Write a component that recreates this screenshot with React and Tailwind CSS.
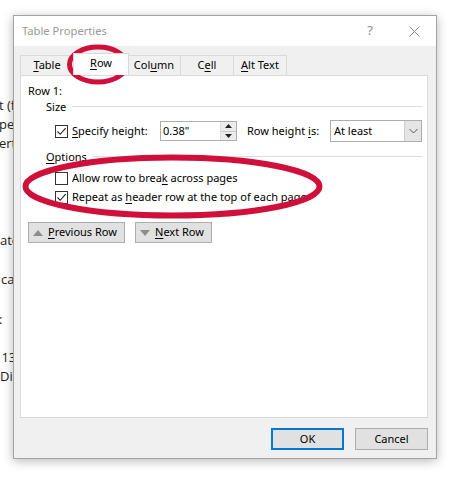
import React from 'react';

const FONT = "font-['Noto_Sans',sans-serif]";

const SIDE_LINES = [
    { top: 97,  text: 't (for', ml: '-ml-[1px]' },
    { top: 116, text: 'pers',   ml: '-ml-[1px]' },
    { top: 135, text: 'ert',    ml: '-ml-[1px]' },
    { top: 232, text: 'ate',    ml: 'ml-0'      },
    { top: 271, text: 'cat',    ml: 'ml-[1px]'  },
    { top: 311, text: ':',      ml: '-ml-[1px]' },
    { top: 349, text: '113',    ml: '-ml-[6px]' },
    { top: 368, text: 'Dist',   ml: 'ml-0'      },
];

function Check({ checked }) {
    return (
        <div className="w-[13px] h-[13px] border border-[#333] bg-white flex items-center justify-center shrink-0">
            {checked && (
                <svg width="11" height="11" viewBox="0 0 11 11">
                    <path d="M1.5 5.5 L4.2 8.3 L9.6 2.2" fill="none" stroke="#222" strokeWidth="1.1" />
                </svg>
            )}
        </div>
    );
}

function Tab({ label, u, selected }) {
    const i = label.indexOf(u);
    return (
        <div
            className={[
                'w-[54px] flex items-center justify-center border border-b-0',
                selected
                    ? 'h-[22px] bg-white border-[#d9d9d9] -mx-[1px] w-[56px] relative z-10 pb-[2px]'
                    : 'h-[20px] bg-[#f0f0f0] border-[#d9d9d9] -ml-[1px] first:ml-0',
            ].join(' ')}
        >
            <span>
                {label.slice(0, i)}
                <span className="underline underline-offset-2">{u}</span>
                {label.slice(i + 1)}
            </span>
        </div>
    );
}

function Mn({ before, u, after }) {
    return (
        <span className="whitespace-nowrap">
            {before}
            <span className="underline underline-offset-2">{u}</span>
            {after}
        </span>
    );
}

export default function App() {
    return (
        <div className={`relative w-[452px] h-[479px] bg-white overflow-hidden flex ${FONT}`}>
            {/* document text peeking out behind the dialog */}
            <div className="w-[13px] shrink-0 relative overflow-hidden text-[13px] text-[#222] font-['Open_Sans',sans-serif]">
                {SIDE_LINES.map((l) => (
                    <div key={l.top} className="absolute left-0 whitespace-nowrap leading-[16px]" style={{ top: l.top }}>
                        <span className={`block ${l.ml}`}>{l.text}</span>
                    </div>
                ))}
            </div>

            {/* dialog */}
            <div className="mt-[15px] w-[424px] h-[444px] border border-[#a3a3a3] bg-[#f0f0f0] flex flex-col shadow-[0_2px_10px_rgba(0,0,0,0.28)] text-[11px] text-black">
                {/* title bar */}
                <div className="h-[30px] bg-white flex items-center pl-[8px] pr-[16px] shrink-0">
                    <span className="text-[#999] text-[11.2px]">Table Properties</span>
                    <span className="ml-auto text-[#8a8a8a] text-[13px] mr-[36px]">?</span>
                    <svg width="11" height="11" viewBox="0 0 11 11">
                        <path d="M0.5 0.5 L10.5 10.5 M10.5 0.5 L0.5 10.5" stroke="#8a8a8a" strokeWidth="1" />
                    </svg>
                </div>

                {/* body */}
                <div className="flex-1 flex flex-col pl-[6px] pr-[8px] pt-[9px] pb-[8px]">
                    <div className="flex items-end h-[20px]">
                        <Tab label="Table" u="T" />
                        <Tab label="Row" u="R" selected />
                        <Tab label="Column" u="u" />
                        <Tab label="Cell" u="e" />
                        <Tab label="Alt Text" u="A" />
                    </div>

                    <div className="h-[343px] bg-white border border-[#d9d9d9] pl-[7px] pr-[5px] pt-[7px] flex flex-col">
                        <div className="h-[16px] leading-[16px]">Row 1:</div>

                        <div className="h-[16px] flex items-center ml-[18px]">
                            <span>Size</span>
                            <div className="flex-1 h-px bg-[#dcdcdc] ml-[6px] -mt-[2px]" />
                        </div>

                        <div className="h-[22px] mt-[5px] flex items-center">
                            <div className="ml-[27px]"><Check checked /></div>
                            <span className="ml-[4px] w-[88px]"><Mn u="S" after="pecify height:" /></span>
                            <div className="w-[77px] h-[20px] border border-[#adadad] flex">
                                <span className="flex-1 pl-[2px] leading-[18px]">0.38"</span>
                                <div className="w-[16px] flex flex-col border-l border-[#e0e0e0]">
                                    <div className="flex-1 flex items-center justify-center bg-[#ececec] border-b border-[#c9c9c9]">
                                        <svg width="7" height="4" viewBox="0 0 7 4"><path d="M3.5 0 L7 4 L0 4 Z" fill="#222" /></svg>
                                    </div>
                                    <div className="flex-1 flex items-center justify-center bg-[#ececec]">
                                        <svg width="7" height="4" viewBox="0 0 7 4"><path d="M0 0 L7 0 L3.5 4 Z" fill="#222" /></svg>
                                    </div>
                                </div>
                            </div>
                            <span className="ml-[10px]"><Mn before="Row height " u="i" after="s:" /></span>
                            <div className="ml-auto w-[92px] h-[22px] border border-[#adadad] flex">
                                <span className="flex-1 pl-[3px] leading-[20px]">At least</span>
                                <div className="w-[17px] bg-[#e5e5e5] border-l border-[#cfcfcf] flex items-center justify-center">
                                    <svg width="9" height="6" viewBox="0 0 9 6">
                                        <path d="M0.5 1 L4.5 5 L8.5 1" fill="none" stroke="#555" strokeWidth="1" />
                                    </svg>
                                </div>
                            </div>
                        </div>

                        <div className="h-[16px] mt-[7px] flex items-center ml-[18px]">
                            <Mn u="O" after="ptions" />
                            <div className="flex-1 h-px bg-[#dcdcdc] ml-[6px] -mt-[2px]" />
                        </div>

                        <div className="h-[19px] mt-[4px] flex items-center">
                            <div className="ml-[27px]"><Check /></div>
                            <span className="ml-[4px]"><Mn before="Allow row to brea" u="k" after=" across pages" /></span>
                        </div>
                        <div className="h-[19px] flex items-center">
                            <div className="ml-[27px]"><Check checked /></div>
                            <span className="ml-[4px]"><Mn before="Repeat as " u="h" after="eader row at the top of each page" /></span>
                        </div>

                        <div className="flex mt-[15px] gap-[10px]">
                            <button className="w-[97px] h-[21px] bg-[#e1e1e1] border border-[#adadad] flex items-center pl-[4px] gap-[5px] text-[11px]">
                                <svg width="10" height="6" viewBox="0 0 10 6"><path d="M5 0 L10 6 L0 6 Z" fill="#8c8c8c" /></svg>
                                <Mn u="P" after="revious Row" />
                            </button>
                            <button className="w-[77px] h-[21px] bg-[#e1e1e1] border border-[#adadad] flex items-center pl-[4px] gap-[5px] text-[11px]">
                                <svg width="10" height="6" viewBox="0 0 10 6"><path d="M0 0 L10 0 L5 6 Z" fill="#8c8c8c" /></svg>
                                <Mn u="N" after="ext Row" />
                            </button>
                        </div>
                    </div>

                    <div className="flex justify-end gap-[11px] mt-[10px]">
                        <button className="w-[73px] h-[22px] bg-[#e1e1e1] border-2 border-[#0078d7] text-[11px]">OK</button>
                        <button className="w-[73px] h-[22px] bg-[#e1e1e1] border border-[#adadad] text-[11px]">Cancel</button>
                    </div>
                </div>
            </div>

            {/* red highlight marks */}
            <svg className="absolute inset-0 pointer-events-none" width="452" height="479" viewBox="0 0 452 479">
                <ellipse cx="98" cy="64.5" rx="28.5" ry="17.5" fill="none" stroke="#d0103a" strokeWidth="5" />
                <ellipse cx="172.5" cy="186.5" rx="147" ry="29" fill="none" stroke="#d0103a" strokeWidth="6" />
            </svg>
        </div>
    );
}
